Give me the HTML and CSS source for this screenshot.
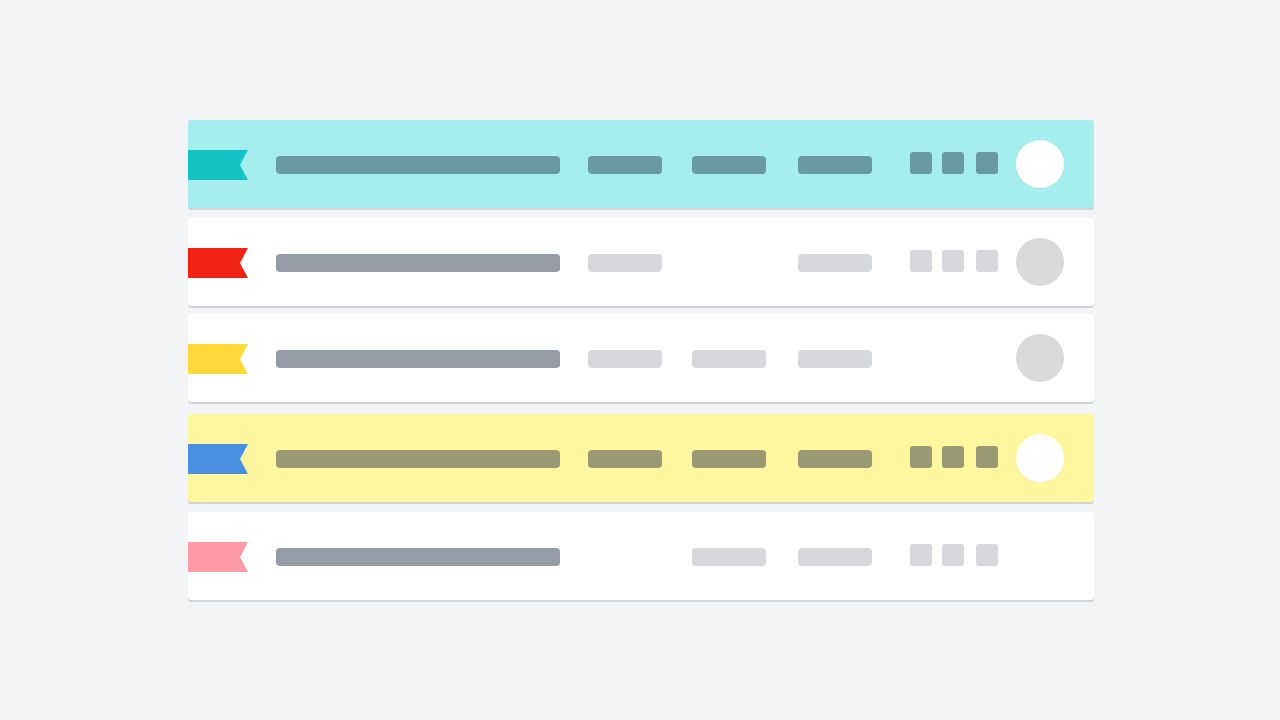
FILE: index.html
```html
<!DOCTYPE html>
<html lang="en">
<head>
<meta charset="utf-8">
<title>List</title>
<link rel="stylesheet" href="styles.css">
</head>
<body>
<main class="list">
  <div class="row row-teal">
    <span class="flag flag-teal"></span>
    <span class="bar bar-long"></span>
    <span class="bar bar-mid"></span>
    <span class="bar bar-mid"></span>
    <span class="bar bar-mid"></span>
    <span class="sq"></span>
    <span class="sq"></span>
    <span class="sq"></span>
    <span class="dot"></span>
  </div>
  <div class="row row-plain">
    <span class="flag flag-red"></span>
    <span class="bar bar-long"></span>
    <span class="bar bar-mid"></span>
    <span class="empty"></span>
    <span class="bar bar-mid"></span>
    <span class="sq"></span>
    <span class="sq"></span>
    <span class="sq"></span>
    <span class="dot"></span>
  </div>
  <div class="row row-plain row-shift">
    <span class="flag flag-yellow"></span>
    <span class="bar bar-long"></span>
    <span class="bar bar-mid"></span>
    <span class="bar bar-mid"></span>
    <span class="bar bar-mid"></span>
    <span class="empty"></span>
    <span class="empty"></span>
    <span class="empty"></span>
    <span class="dot"></span>
  </div>
  <div class="row row-yellow">
    <span class="flag flag-blue"></span>
    <span class="bar bar-long"></span>
    <span class="bar bar-mid"></span>
    <span class="bar bar-mid"></span>
    <span class="bar bar-mid"></span>
    <span class="sq"></span>
    <span class="sq"></span>
    <span class="sq"></span>
    <span class="dot"></span>
  </div>
  <div class="row row-plain">
    <span class="flag flag-pink"></span>
    <span class="bar bar-long"></span>
    <span class="empty"></span>
    <span class="bar bar-mid"></span>
    <span class="bar bar-mid"></span>
    <span class="sq"></span>
    <span class="sq"></span>
    <span class="sq"></span>
    <span class="empty"></span>
  </div>
</main>
</body>
</html>
```

FILE: styles.css
```css
html, body {
  margin: 0;
  padding: 0;
  background: #f3f4f6;
  font-family: "Liberation Sans", Arial, sans-serif;
}

.list {
  width: 906px;
  margin: 120px 0 0 188px;
  padding-bottom: 20px;
  display: flex;
  flex-direction: column;
  gap: 10px;
}

.row {
  box-sizing: border-box;
  height: 88px;
  padding-top: 2px;
  border-radius: 3px;
  box-shadow: 0 2px 0 #cfd2d7;
  display: grid;
  grid-template-columns: 88px 312px 104px 106px 112px 32px 34px 40px 78px;
  align-items: center;
  justify-items: start;
}

.row-shift {
  margin-top: -2px;
  margin-bottom: 2px;
}

.row-teal { background: #a6eded; }
.row-yellow { background: #fff6a0; }
.row-plain { background: #ffffff; }

.flag {
  display: block;
  width: 60px;
  height: 30px;
  clip-path: polygon(0 0, 60px 0, 52px 15px, 60px 30px, 0 30px);
}
.flag-teal { background: #13c2c2; }
.flag-red { background: #f22314; }
.flag-yellow { background: #ffd83a; }
.flag-blue { background: #4a90e2; }
.flag-pink { background: #ff9ba8; }

.bar {
  display: block;
  height: 18px;
  border-radius: 4px;
}
.bar-long { width: 284px; }
.bar-mid { width: 74px; }

.sq {
  display: block;
  width: 22px;
  height: 22px;
  margin-bottom: 4px;
  border-radius: 3px;
}

.dot {
  display: block;
  width: 48px;
  height: 48px;
  margin-bottom: 2px;
  border-radius: 50%;
}

.row-teal .bar, .row-teal .sq { background: #6a9aa1; }
.row-teal .dot { background: #ffffff; }

.row-yellow .bar, .row-yellow .sq { background: #9a9a74; }
.row-yellow .dot { background: #ffffff; }

.row-plain .bar-long { background: #959ca7; }
.row-plain .bar-mid, .row-plain .sq { background: #d7d8dc; }
.row-plain .dot { background: #d9d9d9; }
```
